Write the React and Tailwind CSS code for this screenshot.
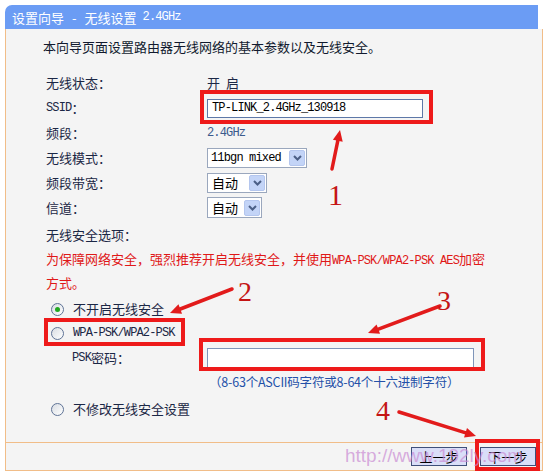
import React from "react";

const CJK = "font-['Noto_Sans_CJK_SC',sans-serif]";
const MONO = "font-['Liberation_Mono','Noto_Sans_CJK_SC',monospace] text-[12px] tracking-[-0.85px]";

function Arrow({ x1, y1, x2, y2 }) {
  const dx = x2 - x1;
  const dy = y2 - y1;
  const len = Math.hypot(dx, dy);
  const ux = dx / len;
  const uy = dy / len;
  const hl = 11;
  const hw = 5;
  const bx = x2 - ux * hl;
  const by = y2 - uy * hl;
  const p1 = `${x2},${y2}`;
  const p2 = `${bx - uy * hw},${by + ux * hw}`;
  const p3 = `${bx + uy * hw},${by - ux * hw}`;
  return (
    <g>
      <line x1={x1} y1={y1} x2={bx + ux * 2} y2={by + uy * 2} stroke="#e21b1b" strokeWidth="3.5" strokeLinecap="round" />
      <polygon points={`${p1} ${p2} ${p3}`} fill="#e21b1b" />
    </g>
  );
}

function Chevron() {
  return (
    <span className="w-[16px] h-[16px] flex items-center justify-center bg-[#c3d4f7] border border-[#b4c6ee] rounded-[2px]">
      <svg width="9" height="6" viewBox="0 0 9 6">
        <path d="M1 1 L4.5 4.5 L8 1" fill="none" stroke="#4b5f86" strokeWidth="2" />
      </svg>
    </span>
  );
}

function Radio({ checked }) {
  return (
    <span className="w-[13px] h-[13px] rounded-full border border-[#5f7396] bg-linear-to-br from-[#d9dde3] to-white flex items-center justify-center">
      {checked && <span className="w-[5px] h-[5px] rounded-full bg-[#21a821]" />}
    </span>
  );
}

export default function App() {
  return (
    <div className={`relative w-[547px] h-[473px] bg-white overflow-hidden ${CJK} text-[13px] text-[#1b2745]`}>
      <div className="pt-[5px] pl-[5px]">
        {/* title bar */}
        <div className="w-[533px] h-[24px] bg-[#6b9cf4] rounded-tl-[7px] flex items-center pl-[7px] text-white leading-none">
          <span>设置向导</span>
          <span className="mx-[8px]">-</span>
          <span>无线设置</span>
          <span className={`${MONO} ml-[6px]`}>2.4GHz</span>
        </div>
        {/* body */}
        <div className="w-[538px] border-l border-r border-[#f1bd88] bg-[#f4f4f4]">
          <div className="h-[413px] pt-[8px]">
            <div className="pl-[37px] h-[20px] flex items-center text-[#111a2e]">
              本向导页面设置路由器无线网络的基本参数以及无线安全。
            </div>
            <div className="mt-[13px] pl-[40px]">
              <div className="h-[25px] flex items-center">
                <span className="w-[161px]">无线状态：</span>
                <span className="flex gap-[6px]"><span>开</span><span>启</span></span>
              </div>
              <div className="h-[25px] flex items-center">
                <span className="w-[161px] flex items-center">
                  <span className={MONO}>SSID</span>：
                </span>
                <div className="w-[216px] h-[19px] mt-[1px] border border-[#5d78a8] bg-white flex items-center pl-[4px]">
                  <span className={`${MONO} text-black`}>TP-LINK_2.4GHz_130918</span>
                </div>
              </div>
              <div className="h-[25px] flex items-center">
                <span className="w-[161px]">频段：</span>
                <span className={`${MONO} text-[#3b5a8c]`}>2.4GHz</span>
              </div>
              <div className="h-[25px] flex items-center">
                <span className="w-[161px]">无线模式：</span>
                <div className="w-[100px] h-[20px] border border-[#9aa7bd] bg-white flex items-center justify-between pl-[3px] pr-[1px]">
                  <span className={`${MONO} text-black`}>11bgn mixed</span>
                  <Chevron />
                </div>
              </div>
              <div className="h-[25px] flex items-center">
                <span className="w-[161px]">频段带宽：</span>
                <div className="w-[60px] h-[20px] border border-[#9aa7bd] bg-white flex items-center justify-between pl-[4px] pr-[1px] text-black">
                  <span>自动</span>
                  <Chevron />
                </div>
              </div>
              <div className="h-[25px] flex items-center">
                <span className="w-[161px]">信道：</span>
                <div className="w-[55px] h-[21px] border border-[#9aa7bd] bg-white flex items-center justify-between pl-[4px] pr-[1px] text-black">
                  <span>自动</span>
                  <Chevron />
                </div>
              </div>
              <div className="mt-[2px] h-[25px] flex items-center">无线安全选项：</div>
              <div className="mt-[1px] text-[#e01818] leading-[22px]">
                为保障网络安全，强烈推荐开启无线安全，并使用<span className={MONO}>WPA-PSK/WPA2-PSK AES</span>加密
                <br />
                方式。
              </div>
              <div className="mt-[3px] h-[24px] flex items-center pl-[5px]">
                <Radio checked />
                <span className="ml-[9px]">不开启无线安全</span>
              </div>
              <div className="h-[24px] flex items-center pl-[5px]">
                <Radio />
                <span className={`ml-[9px] ${MONO}`}>WPA-PSK/WPA2-PSK</span>
              </div>
              <div className="h-[26px] flex items-center">
                <span className="w-[161px] pl-[26px] flex items-center">
                  <span className={MONO}>PSK</span>密码：
                </span>
                <div className="w-[267px] h-[20px] border border-[#7f95b9] bg-white" />
              </div>
              <div className="h-[22px] flex items-center pl-[163px] text-[12.5px] text-[#2350a8] tracking-[-0.2px]">
                （8-63个ASCII码字符或8-64个十六进制字符）
              </div>
              <div className="mt-[4px] h-[24px] flex items-center pl-[5px]">
                <Radio />
                <span className="ml-[9px]">不修改无线安全设置</span>
              </div>
            </div>
          </div>
          {/* footer */}
          <div className="h-[29px] border-t border-b border-[#f1bd88] flex items-center justify-end pr-[6px] gap-[13px]">
            <button className="w-[56px] h-[19px] bg-[#d9def8] border border-[#3e4f7a] text-black text-[13px] leading-none flex items-center justify-center">
              上一步
            </button>
            <button className="w-[56px] h-[19px] bg-[#d9def8] border border-[#3e4f7a] text-black text-[13px] leading-none flex items-center justify-center">
              下一步
            </button>
          </div>
        </div>
      </div>

      {/* annotation overlays */}
      <div className="absolute left-[200px] top-[90px] w-[233px] h-[34px] border-4 border-[#ee1a1a]" />
      <div className="absolute left-[44px] top-[318px] w-[141px] h-[28px] border-4 border-[#ee1a1a]" />
      <div className="absolute left-[199px] top-[338px] w-[286px] h-[33px] border-4 border-[#ee1a1a]" />
      <div className="absolute left-[475px] top-[439px] w-[65px] h-[32px] border-4 border-[#ee1a1a]" />

      <div className="absolute left-[345px] top-[443px] text-[19px] leading-[26px] font-['Liberation_Sans',sans-serif] text-[#c98bd3]/70">
        http://www.192ly.com
      </div>

      <svg className="absolute left-0 top-0 pointer-events-none" width="547" height="473">
        <Arrow x1={332} y1={169} x2={340} y2={130} />
        <Arrow x1={232} y1={289} x2={170} y2={313} />
        <Arrow x1={440} y1={306} x2={368} y2={333} />
        <Arrow x1={399} y1={412} x2={476} y2={436} />
        <text x="328" y="205" fontFamily="'Liberation Serif', serif" fontSize="30" fill="#c41414">1</text>
        <text x="238" y="301" fontFamily="'Liberation Serif', serif" fontSize="28" fill="#c41414">2</text>
        <text x="437" y="310" fontFamily="'Liberation Serif', serif" fontSize="28" fill="#c41414">3</text>
        <text x="376" y="420" fontFamily="'Liberation Serif', serif" fontSize="28" fill="#c41414">4</text>
      </svg>
    </div>
  );
}
